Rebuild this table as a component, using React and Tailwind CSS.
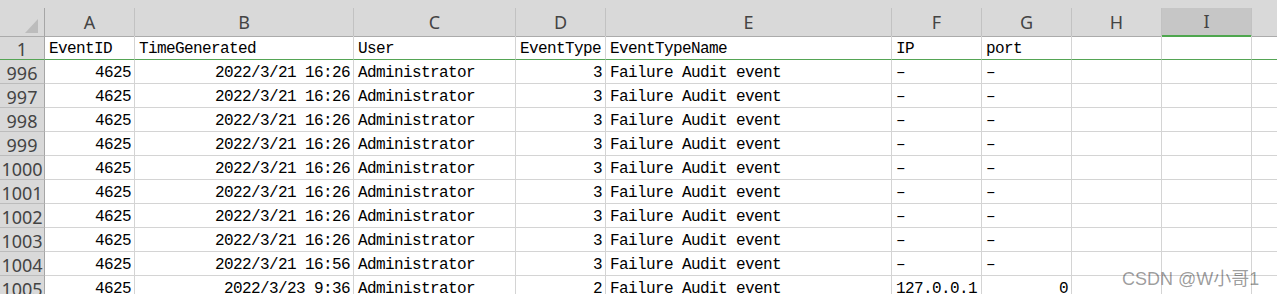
import React from "react";

const cols = ["A", "B", "C", "D", "E", "F", "G", "H", "I"];

const headRow = ["EventID", "TimeGenerated", "User", "EventType", "EventTypeName", "IP", "port"];

const rows = [
  { n: 996, time: "2022/3/21 16:26", type: 3, ip: "–", port: "–" },
  { n: 997, time: "2022/3/21 16:26", type: 3, ip: "–", port: "–" },
  { n: 998, time: "2022/3/21 16:26", type: 3, ip: "–", port: "–" },
  { n: 999, time: "2022/3/21 16:26", type: 3, ip: "–", port: "–" },
  { n: 1000, time: "2022/3/21 16:26", type: 3, ip: "–", port: "–" },
  { n: 1001, time: "2022/3/21 16:26", type: 3, ip: "–", port: "–" },
  { n: 1002, time: "2022/3/21 16:26", type: 3, ip: "–", port: "–" },
  { n: 1003, time: "2022/3/21 16:26", type: 3, ip: "–", port: "–" },
  { n: 1004, time: "2022/3/21 16:56", type: 3, ip: "–", port: "–" },
  { n: 1005, time: "2022/3/23 9:36", type: 2, ip: "127.0.0.1", port: "0", portNum: true },
];

const grid =
  "grid grid-cols-[45px_90px_219px_162px_90px_286px_90px_90px_90px_90px_25px]";

const cell =
  "h-full border-r border-b border-[#d4d4d4] flex items-end pb-[1px] overflow-hidden whitespace-nowrap font-['Liberation_Mono',monospace] text-[16px] leading-[18px] tracking-[-0.6px] text-black";

const RowHead = ({ children, green }) => (
  <div
    className={`h-full bg-[#d9d9d9] border-r border-r-[#a6a6a6] border-b flex items-end justify-center font-['Noto_Sans',sans-serif] text-[18px] leading-[20px] text-[#444] ${
      green ? "border-b-[#55a555]" : "border-b-[#bcbcbc]"
    }`}
  >
    {children}
  </div>
);

const Cell = ({ children, right, green }) => (
  <div
    className={`${cell} ${right ? "justify-end pr-[3px]" : "pl-[4px]"} ${
      green ? "border-b-[#55a555]" : ""
    }`}
  >
    {children}
  </div>
);

export default function App() {
  return (
    <div className="relative w-[1277px] h-[294px] overflow-hidden bg-white">
      <div className="h-2 bg-[#d9d9d9]" />

      <div className={`${grid} h-[28px] bg-[#d9d9d9]`}>
        <div className="relative h-full border-r border-b border-r-[#a6a6a6] border-b-[#ababab]">
          <svg className="absolute left-[25px] top-[11px]" width="13" height="14" viewBox="0 0 13 14">
            <polygon points="13,0 13,14 0,14" fill="#bcbcbc" />
          </svg>
        </div>
        {cols.map((c) => (
          <div
            key={c}
            className={`h-full flex items-center justify-center border-r border-r-[#c2c2c2] font-['Noto_Sans',sans-serif] text-[18px] text-[#444] ${
              c === "I"
                ? "bg-[#c6c6c6] border-b-2 border-b-[#4ea64e]"
                : "border-b border-b-[#ababab]"
            }`}
          >
            {c}
          </div>
        ))}
        <div className="h-full border-b border-b-[#ababab]" />
      </div>

      <div className={`${grid} h-6`}>
        <RowHead green>1</RowHead>
        {headRow.map((t) => (
          <Cell key={t} green>
            {t}
          </Cell>
        ))}
        <Cell green />
        <Cell green />
        <div className="h-full border-b border-b-[#55a555]" />
      </div>

      {rows.map((r) => (
        <div key={r.n} className={`${grid} h-6`}>
          <RowHead>{r.n}</RowHead>
          <Cell right>4625</Cell>
          <Cell right>{r.time}</Cell>
          <Cell>Administrator</Cell>
          <Cell right>{r.type}</Cell>
          <Cell>Failure Audit event</Cell>
          <Cell>{r.ip}</Cell>
          <Cell right={r.portNum}>{r.port}</Cell>
          <Cell />
          <Cell />
          <div className="h-full border-b border-b-[#d4d4d4]" />
        </div>
      ))}

      <div className="absolute left-[1122px] top-[270px] font-['Liberation_Sans','Noto_Sans_CJK_SC',sans-serif] text-[18px] leading-none text-black/40 whitespace-nowrap">
        CSDN @W小哥1
      </div>
    </div>
  );
}
